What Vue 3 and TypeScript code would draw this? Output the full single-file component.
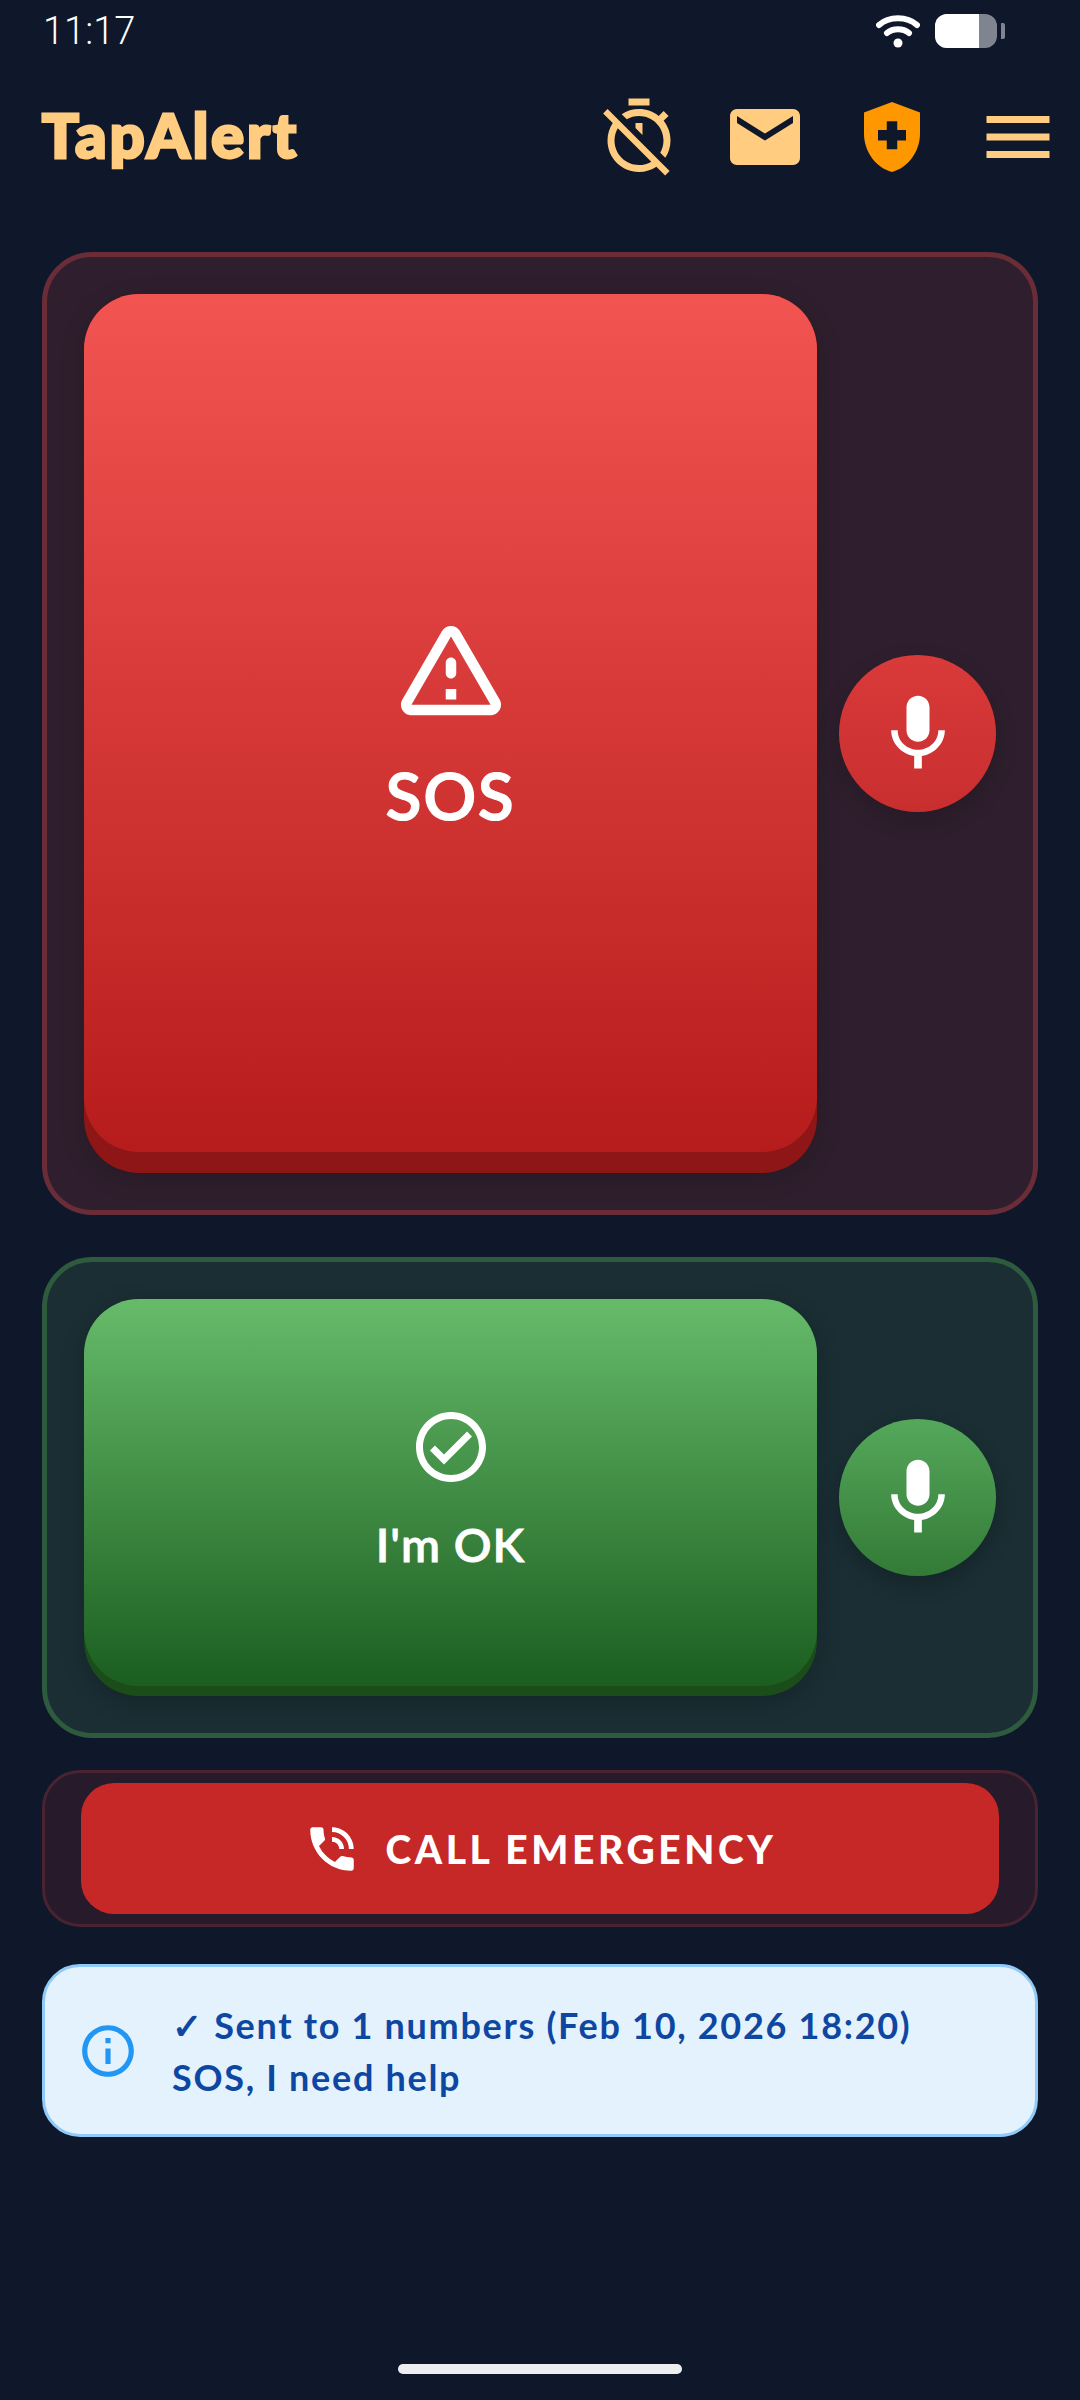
<script setup lang="ts">
const timerOff = "M19.04 4.55l-1.42 1.42C16.07 4.74 14.12 4 12 4c-1.83 0-3.53.55-4.95 1.48l1.46 1.46C9.53 6.35 10.73 6 12 6c3.87 0 7 3.13 7 7 0 1.27-.35 2.47-.94 3.49l1.45 1.45C20.45 16.53 21 14.83 21 13c0-2.12-.74-4.07-1.97-5.61l1.42-1.42-1.41-1.42zM15 1H9v2h6V1zm-4 8.44l2 2V8h-2v1.44zM3.02 4L1.75 5.27 4.5 8.03C3.55 9.45 3 11.16 3 13c0 4.97 4.02 9 8.99 9 1.84 0 3.55-.55 4.98-1.5l2.5 2.5 1.27-1.27-7.71-7.71L3.02 4zM12 20c-3.87 0-7-3.13-7-7 0-1.28.35-2.48.95-3.52l9.56 9.56c-1.03.61-2.23.96-3.51.96z";
const mail = "M20 4H4c-1.1 0-1.99.9-1.99 2L2 18c0 1.1.9 2 2 2h16c1.1 0 2-.9 2-2V6c0-1.1-.9-2-2-2zm0 4l-8 5-8-5V6l8 5 8-5v2z";
const shield = "M12 2L4 5v6.09c0 5.05 3.41 9.76 8 10.91 4.59-1.15 8-5.86 8-10.91V5l-8-3zm1.5 13.5h-3V13H8v-3h2.5V7.5h3V10H16v3h-2.5v2.5z";
const menu = "M3 18h18v-2H3v2zm0-5h18v-2H3v2zm0-7v2h18V6H3z";
const warning = "M12 5.99L19.53 19H4.47L12 5.99M2.74 18c-.77 1.33.19 3 1.73 3h15.06c1.54 0 2.5-1.67 1.73-3L13.73 4.99c-.77-1.33-2.69-1.33-3.46 0L2.74 18zM11 11v2c0 .55.45 1 1 1s1-.45 1-1v-2c0-.55-.45-1-1-1s-1 .45-1 1zm0 5h2v2h-2z";
const mic = "M12 14c1.66 0 3-1.34 3-3V5c0-1.66-1.34-3-3-3S9 3.34 9 5v6c0 1.66 1.34 3 3 3zm5.3-3c0 3-2.54 5.1-5.3 5.1S6.7 14 6.7 11H5c0 3.41 2.72 6.23 6 6.72V21h2v-3.28c3.28-.48 6-3.3 6-6.72h-1.7z";
const okCircle = "M12 2C6.48 2 2 6.48 2 12s4.48 10 10 10 10-4.48 10-10S17.52 2 12 2zm0 18c-4.41 0-8-3.59-8-8s3.59-8 8-8 8 3.59 8 8-3.59 8-8 8zm4.59-12.42L10 14.17l-2.59-2.58L6 13l4 4 8-8-1.41-1.42z";
const phone = "M20 15.5c-1.25 0-2.45-.2-3.57-.57-.35-.11-.74-.03-1.02.24l-2.2 2.2c-2.83-1.44-5.15-3.75-6.59-6.59l2.2-2.21c.28-.26.36-.65.25-1C8.7 6.45 8.5 5.25 8.5 4c0-.55-.45-1-1-1H4c-.55 0-1 .45-1 1 0 9.39 7.61 17 17 17 .55 0 1-.45 1-1v-3.5c0-.55-.45-1-1-1zM19 12h2c0-4.97-4.03-9-9-9v2c3.87 0 7 3.13 7 7zm-4 0h2c0-2.76-2.24-5-5-5v2c1.66 0 3 1.34 3 3z";
const info = "M11 7h2v2h-2zm0 4h2v6h-2zm1-9C6.48 2 2 6.48 2 12s4.48 10 10 10 10-4.48 10-10S17.52 2 12 2zm0 18c-4.41 0-8-3.59-8-8s3.59-8 8-8 8 3.59 8 8-3.59 8-8 8z";
</script>

<template>
  <div class="screen">
    <div class="status">
      <span class="time">11:17</span>
      <div class="status-icons">
        <svg class="wifi" viewBox="0 0 44 34">
          <path d="M3 11 C13 2 31 2 41 11" />
          <path d="M11 19 C17 14 27 14 33 19" />
          <circle cx="22" cy="29" r="4.5" />
        </svg>
        <div class="battery"><div class="battery-level"></div></div>
        <div class="battery-nub"></div>
      </div>
    </div>

    <header class="header">
      <span class="logo">TapAlert</span>
      <div class="actions">
        <svg class="icon" viewBox="0 0 24 24"><path :d="timerOff" fill="#ffcc80" /></svg>
        <svg class="icon" viewBox="0 0 24 24"><path :d="mail" fill="#ffcc80" /></svg>
        <svg class="icon" viewBox="0 0 24 24"><path :d="shield" fill="#ff9800" /></svg>
        <svg class="icon" viewBox="0 0 24 24"><path :d="menu" fill="#ffcc80" /></svg>
      </div>
    </header>

    <main class="main">
      <section class="panel panel-red">
        <button class="tap tap-red">
          <span class="face face-red">
            <svg class="sos-icon" viewBox="0 0 24 24"><path :d="warning" fill="#fff" /></svg>
            <span class="sos-label">SOS</span>
          </span>
        </button>
        <button class="voice voice-red">
          <svg class="mic" viewBox="0 0 24 24"><path :d="mic" fill="#fff" /></svg>
        </button>
      </section>

      <section class="panel panel-green">
        <button class="tap tap-green">
          <span class="face face-green">
            <svg class="ok-icon" viewBox="0 0 24 24"><path :d="okCircle" fill="#fff" /></svg>
            <span class="ok-label">I'm OK</span>
          </span>
        </button>
        <button class="voice voice-green">
          <svg class="mic" viewBox="0 0 24 24"><path :d="mic" fill="#fff" /></svg>
        </button>
      </section>

      <section class="call-panel">
        <button class="call">
          <svg class="phone" viewBox="0 0 24 24"><path :d="phone" fill="#fff" /></svg>
          <span>CALL EMERGENCY</span>
        </button>
      </section>

      <section class="notice">
        <svg class="info" viewBox="0 0 24 24"><path :d="info" fill="#2196f3" /></svg>
        <p class="notice-text">✓ Sent to 1 numbers (Feb 10, 2026 18:20)<br />SOS, I need help</p>
      </section>
    </main>

    <div class="home-bar"></div>
  </div>
</template>

<style>
html, body { margin: 0; background: #0f172a; }
</style>

<style scoped>
.screen {
  width: 1080px;
  height: 2400px;
  background: #0f172a;
  font-family: "Lato", "Noto Sans", sans-serif;
  display: flex;
  flex-direction: column;
  position: relative;
  overflow: hidden;
}
.status {
  height: 62px;
  display: flex;
  align-items: center;
  justify-content: space-between;
  padding: 0 75px 0 43px;
  box-sizing: border-box;
}
.time {
  font-family: "Roboto", sans-serif;
  font-size: 38px;
  font-weight: 300;
  color: #fff;
}
.status-icons { display: flex; align-items: center; }
.wifi { width: 44px; height: 34px; margin-right: 15px; fill: #fff; }
.wifi path { fill: none; stroke: #fff; stroke-width: 6; stroke-linecap: round; }
.battery {
  width: 62px;
  height: 34px;
  border-radius: 12px;
  background: #7f8490;
  overflow: hidden;
}
.battery-level { width: 44px; height: 100%; background: #fff; }
.battery-nub {
  width: 4px;
  height: 16px;
  margin-left: 4px;
  background: #7f8490;
  border-radius: 0 2px 2px 0;
}
.header {
  height: 150px;
  display: flex;
  align-items: center;
  justify-content: space-between;
  padding: 0 20px 0 42px;
  box-sizing: border-box;
}
.logo {
  font-size: 61px;
  font-weight: 900;
  color: #ffcc80;
  letter-spacing: 3.1px;
  -webkit-text-stroke: 3px #ffcc80;
  margin-bottom: 6px;
}
.actions { display: flex; gap: 42.5px; }
.icon { width: 84px; height: 84px; display: block; }
.main {
  padding: 40px 42px 0;
  display: flex;
  flex-direction: column;
}
.panel {
  box-sizing: border-box;
  display: flex;
  align-items: center;
  border-radius: 50px;
  border-width: 5px;
  border-style: solid;
  padding: 37px;
}
.panel-red { height: 963px; background: #2f1f2e; border-color: #6a2c36; }
.panel-green { height: 481px; margin-top: 42px; background: #1a2e33; border-color: #2e5a3e; }
.tap {
  flex: none;
  width: 733px;
  height: 100%;
  padding: 0;
  border: 0;
  border-radius: 55px;
  display: flex;
  color: #fff;
  font-family: inherit;
  box-shadow: 0 6px 24px rgba(0, 0, 0, 0.18);
}
.tap-red { background: #8e1616; padding-bottom: 21px; }
.tap-green { background: #1a4d1a; padding-bottom: 10px; }
.face {
  flex: 1;
  border-radius: 55px;
  display: flex;
  flex-direction: column;
  align-items: center;
  justify-content: center;
}
.face-red { background: linear-gradient(180deg, #f25451, #b71c1c); }
.face-green { background: linear-gradient(180deg, #66bb6a, #1b5e20); }
.sos-icon { width: 126px; height: 126px; }
.sos-label { font-size: 66px; font-weight: 600; letter-spacing: 1.6px; margin: 24px 0 6px; line-height: 80px; -webkit-text-stroke: 1.2px #fff; }
.ok-icon { width: 84px; height: 84px; }
.ok-label { font-size: 47px; font-weight: 600; letter-spacing: 1px; margin: 25px 0 7px; line-height: 60px; -webkit-text-stroke: 0.8px #fff; }
.voice {
  flex: none;
  width: 157px;
  height: 157px;
  margin-left: 22px;
  padding: 0;
  border: 0;
  border-radius: 50%;
  display: flex;
  align-items: center;
  justify-content: center;
  box-shadow: 0 8px 22px rgba(0, 0, 0, 0.2);
}
.voice-red { background: linear-gradient(180deg, #d93a3a, #c92e2e); }
.voice-green { background: linear-gradient(180deg, #55a85b, #337a37); }
.mic { width: 92px; height: 92px; }
.call-panel {
  box-sizing: border-box;
  margin-top: 32px;
  height: 157px;
  padding: 10px 36px;
  background: #271a2a;
  border: 3px solid #4a2330;
  border-radius: 38px;
}
.call {
  width: 100%;
  height: 100%;
  border: 0;
  border-radius: 33px;
  background: #c62828;
  color: #fff;
  display: flex;
  align-items: center;
  justify-content: center;
  gap: 24px;
  font-family: inherit;
  font-size: 39px;
  font-weight: 900;
  letter-spacing: 3.6px;
}
.phone { width: 58px; height: 58px; }
.notice {
  box-sizing: border-box;
  margin-top: 37px;
  height: 173px;
  display: flex;
  align-items: center;
  gap: 33px;
  padding: 0 32px;
  background: #e3f2fd;
  border: 3px solid #90caf9;
  border-radius: 38px;
}
.info { width: 62px; height: 62px; flex: none; }
.notice-text {
  margin: 0;
  color: #0d47a1;
  font-size: 36px;
  line-height: 52px;
  font-weight: 700;
  letter-spacing: 1.7px;
}
.home-bar {
  position: absolute;
  left: 398px;
  bottom: 26px;
  width: 284px;
  height: 10px;
  border-radius: 5px;
  background: #eceef0;
}
</style>
